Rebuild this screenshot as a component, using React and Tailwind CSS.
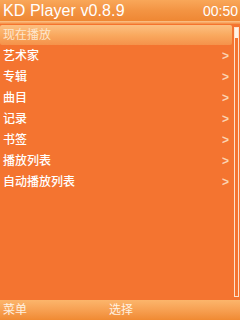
import React from "react";

const items = ["艺术家", "专辑", "曲目", "记录", "书签", "播放列表", "自动播放列表"];

const App = () => {
  return (
    <div
      className="w-[240px] h-[320px] flex flex-col bg-[#f47430] text-white overflow-hidden"
      style={{ fontFamily: '"Liberation Sans", "Noto Sans CJK SC", sans-serif' }}
    >
      {/* Header */}
      <div className="h-[21px] flex items-center justify-between pl-[3px] pr-[2px] bg-gradient-to-b from-[#f9a759] via-[#f39443] to-[#ef8733]">
        <span className="text-[16px] leading-none tracking-[0.1px]">KD Player v0.8.9</span>
        <span className="text-[14px] leading-none">00:50</span>
      </div>
      <div className="h-[3px] bg-gradient-to-b from-[#fbc58a] to-[#f58a3c]" />

      {/* List + scrollbar */}
      <div className="flex-1 flex pt-[1px] pb-[3px]">
        <div className="flex-1 flex flex-col">
          <div className="h-[20px] mr-[2px] flex items-center px-[3px] rounded-[2px] bg-gradient-to-b from-[#fcc081] via-[#f9a95f] to-[#f5924a] text-[12px] text-[#fde6cc]">
            现在播放
          </div>
          {items.map((t) => (
            <div key={t} className="h-[21px] flex items-center justify-between pl-[3px] pr-[5px] text-[12px] font-medium">
              <span>{t}</span>
              <span className="text-[#fbd2b0] text-[12px] font-bold">&gt;</span>
            </div>
          ))}
        </div>
        <div className="w-[5px] mr-[1px] mt-[2px] border border-[#fde2cc] flex flex-col">
          <div className="h-[10px] bg-[#fff3e8]" />
        </div>
      </div>

      {/* Bottom bar */}
      <div className="h-[20px] flex items-center px-[3px] bg-gradient-to-b from-[#fcb56b] via-[#f7a052] to-[#f08a32] text-[12px] text-[#fff1e0]">
        <span className="w-[106px]">菜单</span>
        <span>选择</span>
      </div>
    </div>
  );
};

export default App;
